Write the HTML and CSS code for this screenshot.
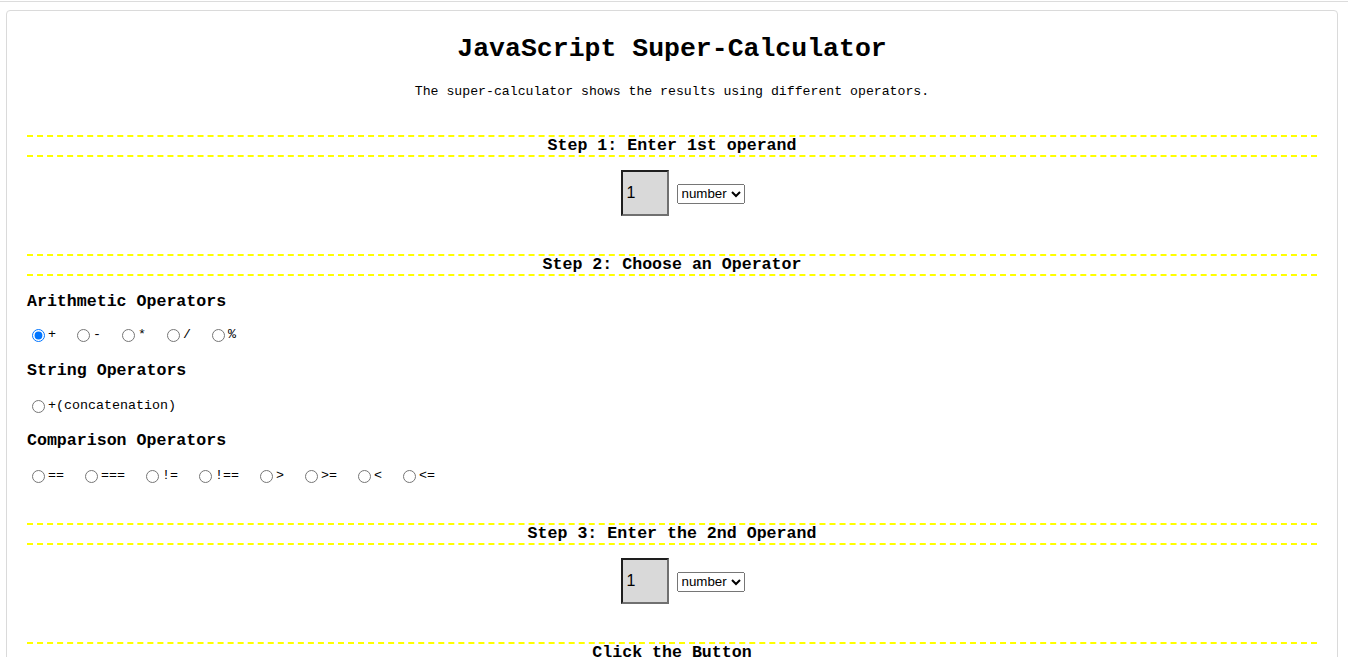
FILE: index.html
```html
<!DOCTYPE html>
<html lang="en">
<head>
<meta charset="utf-8">
<title>JavaScript Super-Calculator</title>
<link rel="stylesheet" href="styles.css">
</head>
<body>
<div class="topline"></div>
<div class="card">
  <h1 class="title">JavaScript Super-Calculator</h1>
  <p class="intro">The super-calculator shows the results using different operators.</p>

  <h3 class="step">Step 1: Enter 1st operand</h3>
  <div class="operand">
    <input class="num" type="text" value="1">
    <select class="type"><option>number</option><option>string</option></select>
  </div>

  <h3 class="step">Step 2: Choose an Operator</h3>
  <h4 class="group">Arithmetic Operators</h4>
  <div class="ops ops-first">
    <label class="op"><input type="radio" name="op" checked>+</label>
    <label class="op"><input type="radio" name="op">-</label>
    <label class="op"><input type="radio" name="op">*</label>
    <label class="op"><input type="radio" name="op">/</label>
    <label class="op"><input type="radio" name="op">%</label>
  </div>
  <h4 class="group">String Operators</h4>
  <div class="ops">
    <label class="op"><input type="radio" name="op">+(concatenation)</label>
  </div>
  <h4 class="group group-tight">Comparison Operators</h4>
  <div class="ops">
    <label class="op"><input type="radio" name="op">==</label>
    <label class="op"><input type="radio" name="op">===</label>
    <label class="op"><input type="radio" name="op">!=</label>
    <label class="op"><input type="radio" name="op">!==</label>
    <label class="op"><input type="radio" name="op">&gt;</label>
    <label class="op"><input type="radio" name="op">&gt;=</label>
    <label class="op"><input type="radio" name="op">&lt;</label>
    <label class="op"><input type="radio" name="op">&lt;=</label>
  </div>

  <h3 class="step step-3">Step 3: Enter the 2nd Operand</h3>
  <div class="operand">
    <input class="num" type="text" value="1">
    <select class="type"><option>number</option><option>string</option></select>
  </div>

  <h3 class="step">Click the Button</h3>
  <div class="operand">
    <button class="calc" type="button">Calculate</button>
  </div>
</div>
</body>
</html>
```

FILE: styles.css
```css
html, body {
  margin: 0;
  padding: 0;
  background: #fff;
  color: #000;
  font-family: "Liberation Mono", "Courier New", monospace;
}

.topline {
  margin-top: 1px;
  height: 1px;
  background: #dcdcdc;
}

.card {
  margin: 8px 10px 20px 6px;
  border: 1px solid #dadada;
  border-radius: 4px;
  padding: 23px 20px 40px 20px;
}

.title {
  margin: 0;
  text-align: center;
  font-size: 26.5px;
  line-height: 30px;
  font-weight: bold;
}

.intro {
  margin: 20px 0 0 0;
  text-align: center;
  font-size: 13.2px;
  line-height: 16px;
}

.step {
  margin: 35px 0 0 0;
  border-top: 2px dashed #ffff00;
  border-bottom: 2px dashed #ffff00;
  text-align: center;
  font-size: 16.6px;
  line-height: 18px;
  font-weight: bold;
}

.step-3 {
  margin-top: 37px;
}

.operand {
  display: flex;
  justify-content: center;
  align-items: center;
  gap: 8px;
  margin-top: 13px;
  padding-left: 21px;
}

.operand + .step {
  margin-top: 38px;
}

.num {
  box-sizing: border-box;
  width: 48px;
  height: 46px;
  margin: 0;
  padding: 0 0 0 4px;
  background: #d9d9d9;
  border-style: solid;
  border-width: 2px;
  border-color: #1e1e1e #707070 #707070 #1e1e1e;
  font-family: "Liberation Sans", Arial, sans-serif;
  font-size: 16px;
  color: #000;
}

.type {
  margin: 1px 0 0 0;
  height: 20px;
  font-family: "Liberation Sans", Arial, sans-serif;
  font-size: 13.33px;
}

.group {
  margin: 16px 0 0 0;
  font-size: 16.6px;
  line-height: 20px;
  font-weight: bold;
}

.group-tight {
  margin-top: 15px;
}

.ops {
  display: flex;
  align-items: center;
  gap: 16px;
  margin-top: 15px;
  height: 20px;
}

.ops-first {
  margin-top: 13px;
}

.op {
  display: flex;
  align-items: center;
  font-size: 13.33px;
  line-height: 20px;
}

.op input {
  margin: 0 3px 0 5px;
  width: 13px;
  height: 13px;
}

.calc {
  font-family: "Liberation Sans", Arial, sans-serif;
  font-size: 13.33px;
}
```
